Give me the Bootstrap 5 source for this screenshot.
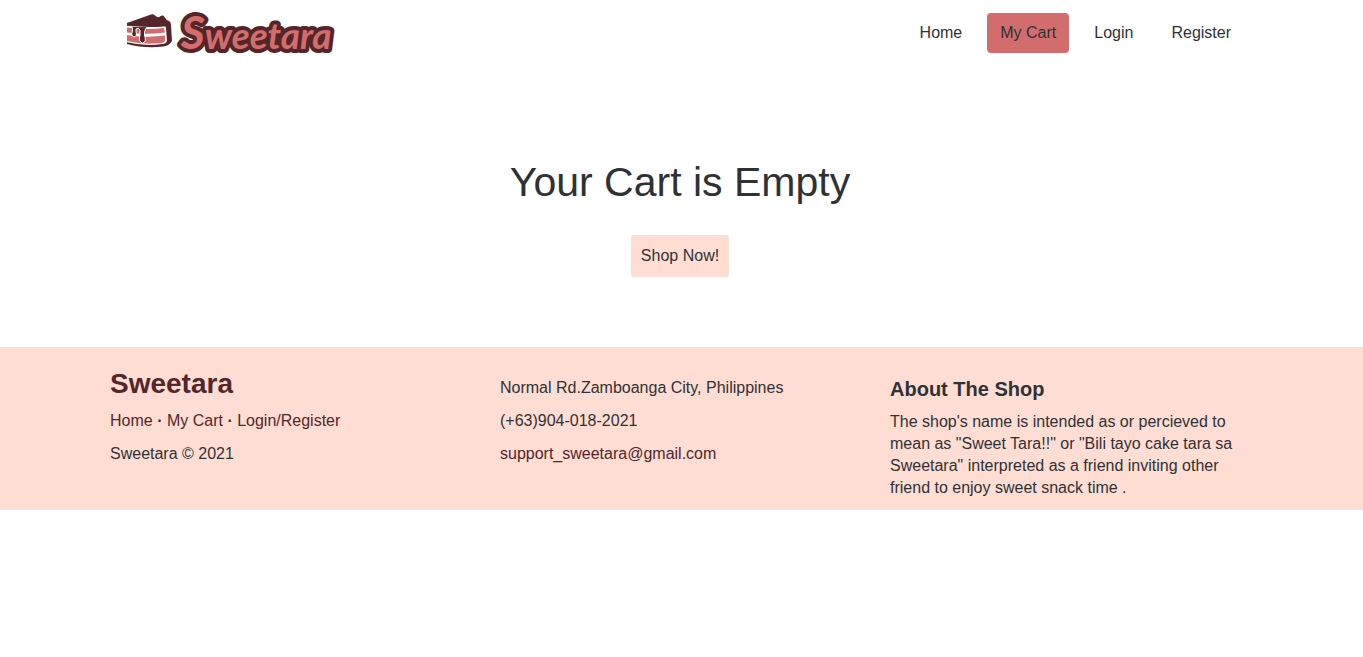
<!DOCTYPE html>
<html lang="en">
<head>
<meta charset="utf-8">
<meta name="viewport" content="width=device-width, initial-scale=1">
<title>Sweetara - My Cart</title>
<link href="https://cdn.jsdelivr.net/npm/bootstrap@5.3.0/dist/css/bootstrap.min.css" rel="stylesheet">
<style>
  :root { --cocoa: #54262a; --rose: #d36d6d; --blush: #ffddd3; --ink: #2f3235; }
  body { font: 16px/22px "Liberation Sans", Arial, sans-serif; color: var(--ink); background: #fff; }
  .shell { max-width: 1170px; padding: 0 15px; }
  .band { padding-right: 3px; }
  .site-nav .navbar-nav { gap: 12px; margin-right: 6px; }
  .site-nav .navbar-nav .nav-link { color: var(--ink); padding: 9px 13px; border-radius: 4px; }
  .site-nav .navbar-nav .nav-link.active { background: var(--rose); color: var(--ink); }
  .logo-art { width: 212px; height: 66px; overflow: visible; }
  .logo-word { font-family: Lato, "Liberation Sans", sans-serif; font-weight: 700; font-style: italic; fill: var(--rose); stroke: var(--cocoa); paint-order: stroke; stroke-linejoin: round; }
  .empty-cart { padding-top: 91px; padding-bottom: 70px; }
  .empty-cart h1 { font-size: 41px; line-height: 50px; margin-bottom: 28px; }
  .btn-shop { --bs-btn-bg: var(--blush); --bs-btn-color: var(--ink); --bs-btn-hover-bg: var(--rose); --bs-btn-border-width: 0; --bs-btn-border-radius: 3px; --bs-btn-padding-x: 10px; --bs-btn-padding-y: 10px; line-height: 22px; }
  .site-footer { background: var(--blush); }
  .site-footer p { margin-bottom: 11px; }
  .site-footer a { color: var(--cocoa); text-decoration: none; }
  .site-footer .row { --bs-gutter-x: 30px; }
  .foot-col { padding-top: 30px; }
  .foot-brand { padding-top: 19px; }
  .foot-brand h2 { font-size: 28px; line-height: 36px; font-weight: 700; color: var(--cocoa); margin-bottom: 8px; }
  .foot-col h3 { font-size: 20px; line-height: 24px; font-weight: 700; margin-bottom: 10px; }
</style>
</head>
<body>
<header class="band">
  <nav class="navbar navbar-expand-sm site-nav p-0" aria-label="Main">
    <div class="container-fluid shell">
      <a class="navbar-brand ms-3 me-0 py-0" href="#" aria-label="Sweetara home">
        <svg class="logo-art d-block" viewBox="0 -8 212 66">
          <path fill="#54262a" d="M1 15 L25 6.500 Q28 5.500 29.500 8 Q32 10 34 8.500 Q37 6.500 38.500 9 Q40 12 43 13 Q45 14 45 17 L46 33 Q43 38 37 38.500 Q20 41 1 36Z"/>
          <path fill="#fff" d="M0 17.500 Q20 20 38 18 Q40 18 40 20 L41 33 Q40 36 36 36 Q18 38.500 0 34Z"/>
          <path fill="#d36d6d" d="M1 19.500 Q20 22 38 20 L39 24.500 Q20 27 1 24.500Z M1 27 Q19 30 39 27.500 V32 Q39 34.500 35 35 Q17 37 1 33Z"/>
          <path fill="#54262a" stroke="#fff" d="M5 18 Q14 19 22 18.500 Q19 20 18.500 24 V27 Q21 34 16.500 35 Q12 34 14 27 V22 Q13 19 10 21 V24 Q11.500 28 8 29 Q4.500 28 6.500 23 V20Z"/>
          <path fill="#54262a" d="M1 15 L36 9 L43 18 Q22 20 1 17.500Z"/>
          <text class="logo-word" x="55" y="41" font-size="46" stroke-width="8">S<tspan font-size="37">weetara</tspan></text>
        </svg>
      </a>
      <ul class="navbar-nav ms-auto">
        <li class="nav-item"><a class="nav-link" href="#">Home</a></li>
        <li class="nav-item"><a class="nav-link active" aria-current="page" href="#">My Cart</a></li>
        <li class="nav-item"><a class="nav-link" href="#">Login</a></li>
        <li class="nav-item"><a class="nav-link" href="#">Register</a></li>
      </ul>
    </div>
  </nav>
</header>
<main class="band empty-cart text-center">
  <h1>Your Cart is Empty</h1>
  <button type="button" class="btn btn-shop">Shop Now!</button>
</main>
<footer class="band site-footer">
  <div class="container-fluid shell">
    <div class="row">
      <div class="col-md-4 foot-brand">
        <h2>Sweetara</h2>
        <p><a href="#">Home</a> <b>·</b> <a href="#">My Cart</a> <b>·</b> <a href="#">Login/Register</a></p>
        <p>Sweetara © 2021</p>
      </div>
      <div class="col-md-4 foot-col">
        <p>Normal Rd.Zamboanga City, Philippines</p>
        <p>(+63)904-018-2021</p>
        <p><a href="mailto:support_sweetara@gmail.com">support_sweetara@gmail.com</a></p>
      </div>
      <div class="col-md-4 foot-col">
        <h3>About The Shop</h3>
        <p>The shop's name is intended as or percieved to mean as "Sweet Tara!!" or "Bili tayo cake tara sa Sweetara" interpreted as a friend inviting other friend to enjoy sweet snack time .</p>
      </div>
    </div>
  </div>
</footer>
<script src="https://cdn.jsdelivr.net/npm/bootstrap@5.3.0/dist/js/bootstrap.bundle.min.js"></script>
</body>
</html>
